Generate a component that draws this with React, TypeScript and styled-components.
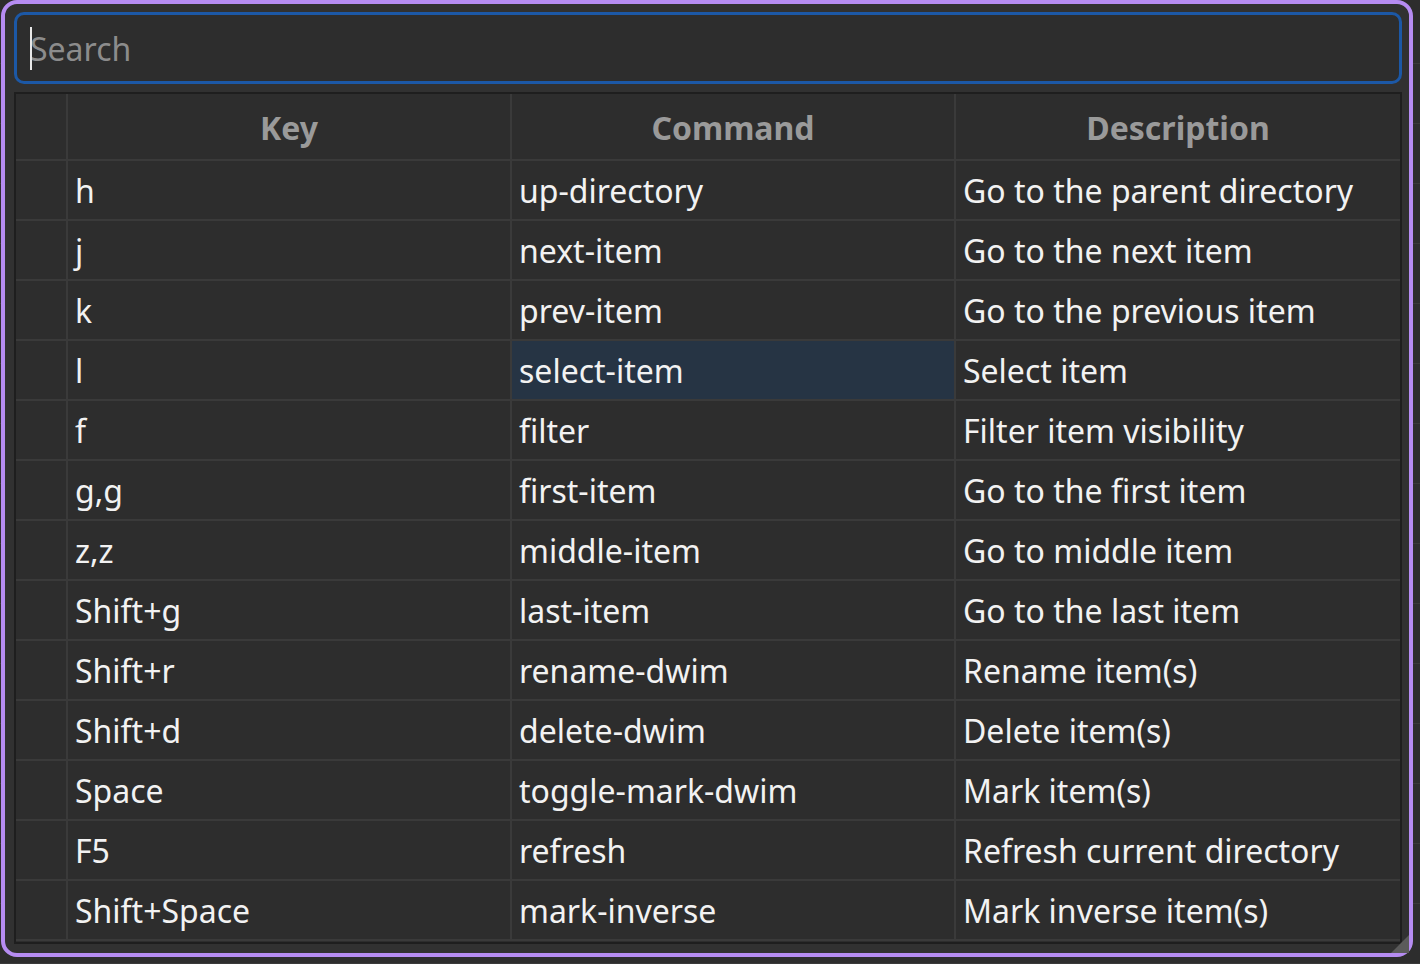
import React from 'react'
import styled, { createGlobalStyle } from 'styled-components'

const GlobalStyle = createGlobalStyle`
  html, body {
    margin: 0;
    padding: 0;
    background: #2b2b2b;
    font-family: 'Noto Sans', 'Open Sans', sans-serif;
  }
`

const bindings = [
  { key: 'h', command: 'up-directory', description: 'Go to the parent directory' },
  { key: 'j', command: 'next-item', description: 'Go to the next item' },
  { key: 'k', command: 'prev-item', description: 'Go to the previous item' },
  { key: 'l', command: 'select-item', description: 'Select item', selected: true },
  { key: 'f', command: 'filter', description: 'Filter item visibility' },
  { key: 'g,g', command: 'first-item', description: 'Go to the first item' },
  { key: 'z,z', command: 'middle-item', description: 'Go to middle item' },
  { key: 'Shift+g', command: 'last-item', description: 'Go to the last item' },
  { key: 'Shift+r', command: 'rename-dwim', description: 'Rename item(s)' },
  { key: 'Shift+d', command: 'delete-dwim', description: 'Delete item(s)' },
  { key: 'Space', command: 'toggle-mark-dwim', description: 'Mark item(s)' },
  { key: 'F5', command: 'refresh', description: 'Refresh current directory' },
  { key: 'Shift+Space', command: 'mark-inverse', description: 'Mark inverse item(s)' },
]

const App = () => {
  return (
    <>
      <GlobalStyle />
      <Screen>
        <Dialog>
          <SearchBox>
            <SearchInput placeholder="Search" />
            <Caret />
          </SearchBox>

          <Table>
            <HeaderRow>
              <CornerCell />
              <HeaderCell>Key</HeaderCell>
              <HeaderCell>Command</HeaderCell>
              <HeaderCell>Description</HeaderCell>
            </HeaderRow>
            {bindings.map((b) => (
              <Row key={b.key}>
                <RowHeaderCell />
                <Cell>{b.key}</Cell>
                <Cell $selected={b.selected}>{b.command}</Cell>
                <Cell>{b.description}</Cell>
              </Row>
            ))}
          </Table>

          <SizeGrip viewBox="0 0 20 20">
            <path d="M20 0 L20 20 L0 20 Z" fill="#5b5b5b" />
          </SizeGrip>
        </Dialog>
      </Screen>
    </>
  )
}

const Screen = styled.div`
  width: 1420px;
  height: 964px;
  overflow: hidden;
  background:
    repeating-linear-gradient(
      to bottom,
      transparent 0,
      transparent 59px,
      #3a3a3a 59px,
      #3a3a3a 60px
    ),
    #2d2d2d;
  background-position: 0 4px;
`

const Dialog = styled.div`
  position: relative;
  box-sizing: border-box;
  margin-left: 1px;
  width: 1412px;
  height: 957px;
  padding: 8px 7px 0 9px;
  border: 4px solid #b68cf2;
  border-radius: 16px;
  background: #313131;
  display: flex;
  flex-direction: column;
  gap: 8px;
`

const SearchBox = styled.div`
  position: relative;
  box-sizing: border-box;
  height: 72px;
  border: 3px solid #1c58a6;
  border-radius: 10px;
  background: #2d2d2d;
  display: flex;
  align-items: center;
`

const SearchInput = styled.input`
  flex: 1;
  height: 100%;
  border: none;
  outline: none;
  background: transparent;
  padding: 0 0 0 13px;
  font-family: 'Noto Sans', sans-serif;
  font-size: 32px;
  color: #e6e6e6;

  &::placeholder {
    color: #8c8c8c;
  }
`

const Caret = styled.span`
  position: absolute;
  left: 13px;
  top: 12px;
  width: 2px;
  height: 43px;
  background: #e8e8e8;
`

const Table = styled.div`
  box-sizing: border-box;
  width: 1388px;
  border: 2px solid #1e1e1e;
  background: #2d2d2d;
  display: flex;
  flex-direction: column;
  height: 852px;
`

const gridColumns = '52px 444px 444px 1fr'

const HeaderRow = styled.div`
  display: grid;
  grid-template-columns: ${gridColumns};
  height: 67px;
  flex-shrink: 0;
  border-bottom: 2px solid #3a3a3a;
  box-sizing: border-box;
`

const CornerCell = styled.div`
  border-right: 2px solid #3a3a3a;
`

const HeaderCell = styled.div`
  display: flex;
  align-items: center;
  justify-content: center;
  padding-top: 2px;
  font-size: 32px;
  font-weight: 700;
  color: #9a9a9a;
  border-right: 2px solid #3a3a3a;

  &:last-child {
    border-right: none;
  }
`

const Row = styled.div`
  display: grid;
  grid-template-columns: ${gridColumns};
  height: 60px;
  flex-shrink: 0;
  box-sizing: border-box;
  border-bottom: 2px solid #3a3a3a;
`

const RowHeaderCell = styled.div`
  border-right: 2px solid #3a3a3a;
`

const Cell = styled.div<{ $selected?: boolean }>`
  display: flex;
  align-items: center;
  padding-left: 7px;
  font-size: 32px;
  color: #f2f2f2;
  background: ${(p) => (p.$selected ? '#263444' : 'transparent')};
  border-right: 2px solid #3a3a3a;
  white-space: nowrap;

  &:last-child {
    border-right: none;
  }
`

const SizeGrip = styled.svg`
  position: absolute;
  right: 0;
  bottom: 0;
  width: 18px;
  height: 18px;
`

export default App
